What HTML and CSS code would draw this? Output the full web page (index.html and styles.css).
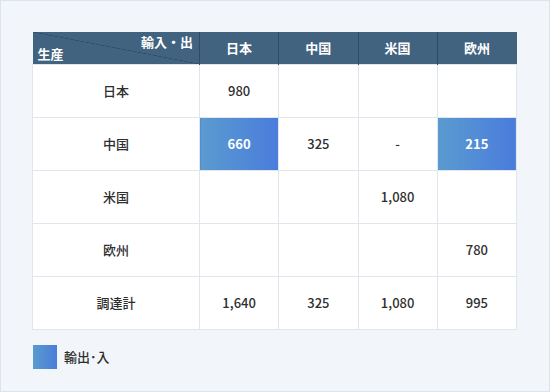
FILE: index.html
```html
<!DOCTYPE html>
<html lang="ja">
<head>
<meta charset="utf-8">
<link rel="stylesheet" href="styles.css">
</head>
<body>
<div class="frame">
  <table class="matrix">
    <colgroup>
      <col class="c-head">
      <col class="c-val"><col class="c-val"><col class="c-val"><col class="c-val">
    </colgroup>
    <thead>
      <tr>
        <th class="corner"><span class="in">輸入・出</span><span class="prod">生産</span></th>
        <th>日本</th><th>中国</th><th>米国</th><th>欧州</th>
      </tr>
    </thead>
    <tbody>
      <tr><td>日本</td><td>980</td><td></td><td></td><td></td></tr>
      <tr><td>中国</td><td class="hl">660</td><td>325</td><td>-</td><td class="hl">215</td></tr>
      <tr><td>米国</td><td></td><td></td><td>1,080</td><td></td></tr>
      <tr><td>欧州</td><td></td><td></td><td></td><td>780</td></tr>
      <tr><td>調達計</td><td>1,640</td><td>325</td><td>1,080</td><td>995</td></tr>
    </tbody>
  </table>
  <div class="legend"><span class="swatch"></span><span class="legend-label">輸出･入</span></div>
</div>
</body>
</html>
```
FILE: styles.css
```css
* { box-sizing: border-box; }
html, body { margin: 0; padding: 0; }
body {
  font-family: "Noto Sans CJK JP", "Noto Sans", sans-serif;
  color: #333;
}
.frame {
  width: 550px;
  height: 392px;
  background: #f2f6fa;
  border: 1px solid #dde3ea;
  padding: 31px 0 0 31px;
  display: flex;
  flex-direction: column;
}
.matrix {
  border-collapse: collapse;
  table-layout: fixed;
  width: 484px;
  font-size: 13px;
  font-weight: 500;
}
.c-head { width: 167px; }
.c-val { width: 79.25px; }
.matrix th {
  background: #42637f;
  color: #fff;
  font-weight: 700;
  height: 32px;
  padding: 0;
  border-left: 1px solid #2b4b68;
  text-align: center;
  vertical-align: middle;
}
.matrix th:first-child { border-left: none; }
.matrix th.corner {
  position: relative;
  background: linear-gradient(to top right, transparent calc(50% - 0.6px), #2b4a67 50%, transparent calc(50% + 0.6px)), #42637f;
  text-align: left;
}
.corner .in {
  position: absolute;
  right: 6px;
  top: 2px;
  line-height: 16px;
}
.corner .prod {
  position: absolute;
  left: 5px;
  bottom: 2px;
  line-height: 16px;
}
.matrix td {
  background: #fff;
  border: 1px solid #e1e6ec;
  height: 53px;
  padding: 0;
  text-align: center;
  vertical-align: middle;
  color: #2e2e2e;
}
.matrix td.hl {
  background: linear-gradient(to right, #5a9bcf, #4a7cdc);
  color: #fff;
  font-weight: 700;
}
.legend {
  display: flex;
  align-items: center;
  gap: 7px;
  margin-top: 15px;
  padding-left: 1px;
}
.swatch {
  width: 24px;
  height: 24px;
  background: linear-gradient(to right, #5a9bcf, #4a7cdc);
}
.legend-label {
  font-size: 13px;
  font-weight: 500;
  color: #2e2e2e;
}
```
